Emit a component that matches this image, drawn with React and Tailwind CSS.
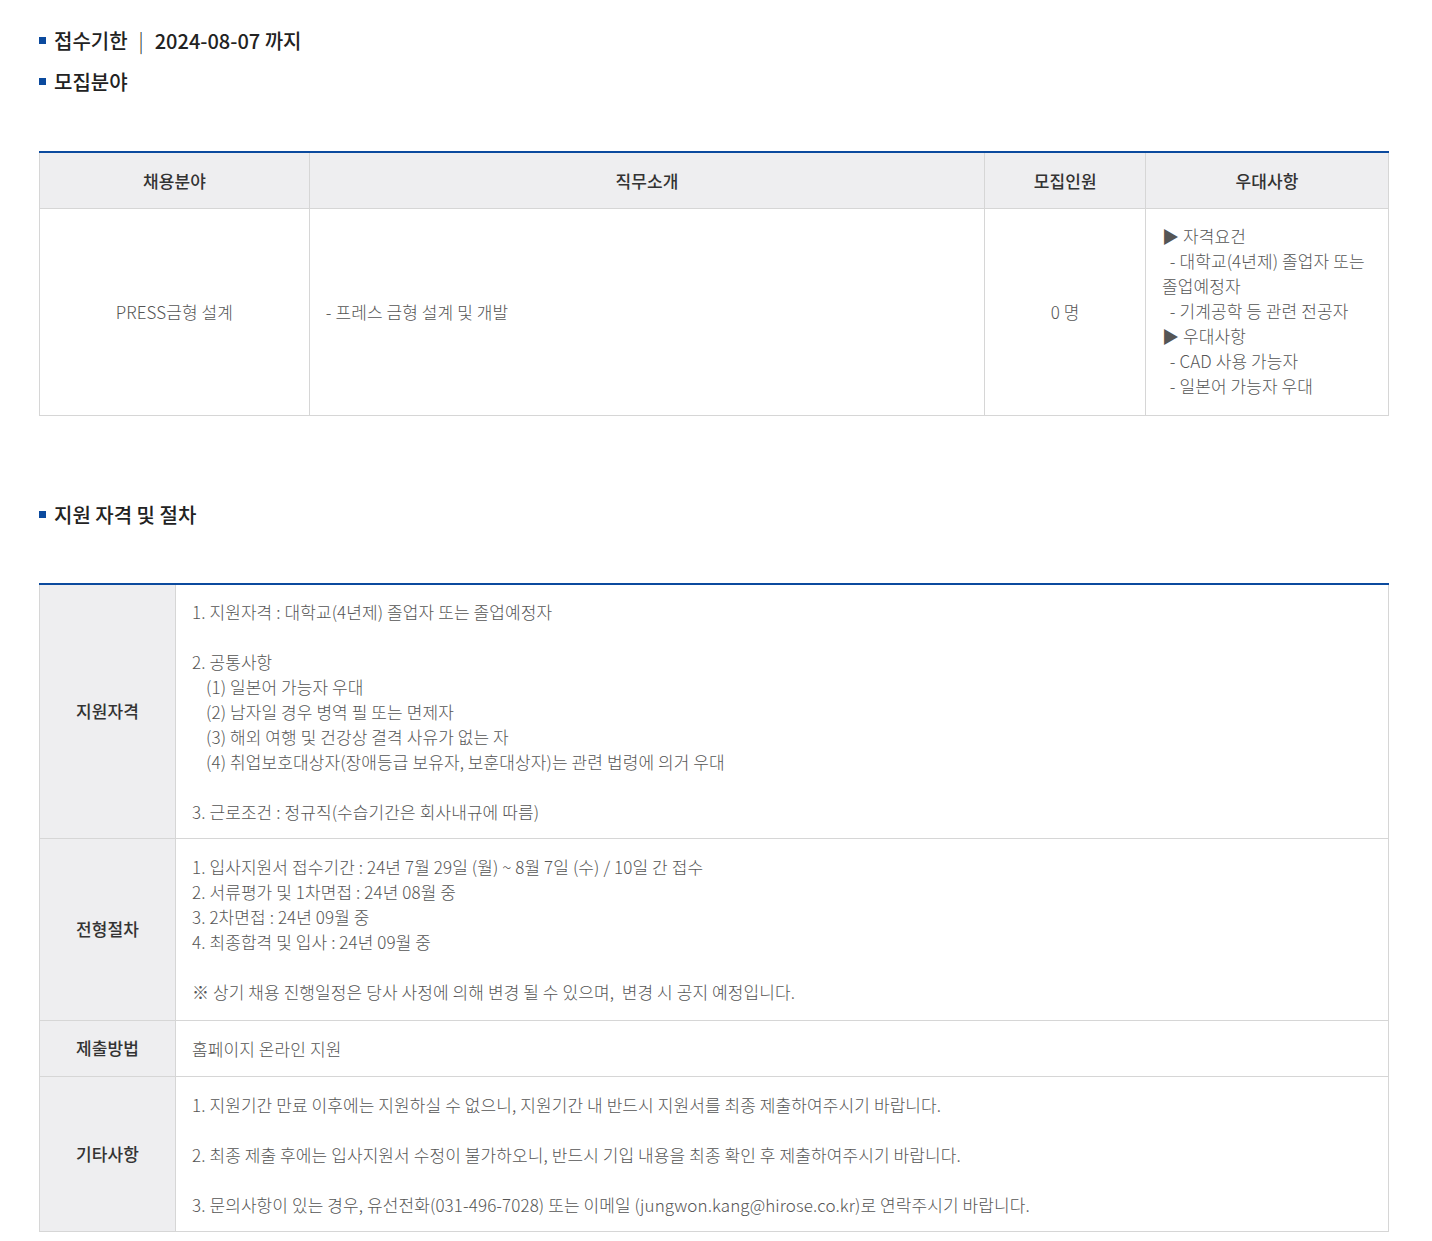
const font = { fontFamily: '"Noto Sans CJK KR", "Noto Sans", sans-serif' };

function Heading({ children, className = "" }) {
    return (
        <h3 className={`flex items-center text-[20px] leading-[26px] font-medium text-[#222] ${className}`}>
            <span className="mr-[8px] mb-[1px] inline-block w-[7px] h-[7px] bg-[#0b4a9e] shrink-0" />
            <span>{children}</span>
        </h3>
    );
}

const qualify = [
    { t: "1. 지원자격 : 대학교(4년제) 졸업자 또는 졸업예정자" },
    { t: "" },
    { t: "2. 공통사항" },
    { t: "(1) 일본어 가능자 우대", indent: true },
    { t: "(2) 남자일 경우 병역 필 또는 면제자", indent: true },
    { t: "(3) 해외 여행 및 건강상 결격 사유가 없는 자", indent: true },
    { t: "(4) 취업보호대상자(장애등급 보유자, 보훈대상자)는 관련 법령에 의거 우대", indent: true },
    { t: "" },
    { t: "3. 근로조건 : 정규직(수습기간은 회사내규에 따름)" },
];

const process = [
    { t: "1. 입사지원서 접수기간 : 24년 7월 29일 (월) ~ 8월 7일 (수) / 10일 간 접수" },
    { t: "2. 서류평가 및 1차면접 : 24년 08월 중" },
    { t: "3. 2차면접 : 24년 09월 중" },
    { t: "4. 최종합격 및 입사 : 24년 09월 중" },
    { t: "" },
    { t: "※ 상기 채용 진행일정은 당사 사정에 의해 변경 될 수 있으며,  변경 시 공지 예정입니다." },
];

const etc = [
    { t: "1. 지원기간 만료 이후에는 지원하실 수 없으니, 지원기간 내 반드시 지원서를 최종 제출하여주시기 바랍니다." },
    { t: "" },
    { t: "2. 최종 제출 후에는 입사지원서 수정이 불가하오니, 반드시 기입 내용을 최종 확인 후 제출하여주시기 바랍니다." },
    { t: "" },
    { t: "3. 문의사항이 있는 경우, 유선전화(031-496-7028) 또는 이메일 (jungwon.kang@hirose.co.kr)로 연락주시기 바랍니다." },
];

const rows = [
    { label: "지원자격", lines: qualify, pad: "pt-[14px] pb-[14px]" },
    { label: "전형절차", lines: process, pad: "pt-[15px] pb-[16px]" },
    { label: "제출방법", lines: [{ t: "홈페이지 온라인 지원" }], pad: "pt-[15px] pb-[15px]" },
    { label: "기타사항", lines: etc, pad: "pt-[15px] pb-[14px]" },
];

function Lines({ lines }) {
    return lines.map((l, i) => (
        <p key={i} className={`h-[25px] whitespace-pre ${l.indent ? "pl-[14px]" : ""}`}>
            {l.t}
        </p>
    ));
}

export default function App() {
    return (
        <div style={font} className="bg-white w-[1432px] min-h-[1241px] pl-[39px] pr-[43px] pt-[28px]">
            <Heading>
                접수기한<span className="mx-[11px] font-light">|</span>2024-08-07 까지
            </Heading>
            <Heading className="mt-[15px]">모집분야</Heading>

            <table className="mt-[56px] w-full border-collapse border-t-2 border-t-[#0b4a9e] text-[17px] tracking-[0.1px]">
                <thead>
                    <tr className="bg-[#eeeef0] h-[56px]">
                        {["채용분야", "직무소개", "모집인원", "우대사항"].map((h, i) => (
                            <th
                                key={h}
                                className={`border border-[#d6d6d6] border-t-0 font-medium text-[#333] ${
                                    ["w-[270px]", "w-[676px]", "w-[161px]", "w-[243px]"][i]
                                }`}
                            >
                                {h}
                            </th>
                        ))}
                    </tr>
                </thead>
                <tbody className="font-light text-[#555] leading-[25px]">
                    <tr>
                        <td className="border border-[#d6d6d6] text-center">PRESS금형 설계</td>
                        <td className="border border-[#d6d6d6] px-[16px]">- 프레스 금형 설계 및 개발</td>
                        <td className="border border-[#d6d6d6] text-center">0 명</td>
                        <td className="border border-[#d6d6d6] pl-[16px] pr-[12px] pt-[14px] pb-[17px] align-top break-keep">
                            <p>▶ 자격요건</p>
                            <p className="whitespace-pre-wrap">{"  - 대학교(4년제) 졸업자 또는 졸업예정자"}</p>
                            <p className="whitespace-pre-wrap">{"  - 기계공학 등 관련 전공자"}</p>
                            <p>▶ 우대사항</p>
                            <p className="whitespace-pre-wrap">{"  - CAD 사용 가능자"}</p>
                            <p className="whitespace-pre-wrap">{"  - 일본어 가능자 우대"}</p>
                        </td>
                    </tr>
                </tbody>
            </table>

            <Heading className="mt-[86px]">지원 자격 및 절차</Heading>

            <table className="mt-[55px] w-full border-collapse border-t-2 border-t-[#0b4a9e] text-[17px] tracking-[0.1px]">
                <tbody>
                    {rows.map((r) => (
                        <tr key={r.label}>
                            <th className="w-[136px] bg-[#eeeef0] border border-[#d6d6d6] border-t-0 font-medium text-[#333]">
                                {r.label}
                            </th>
                            <td className={`border border-[#d6d6d6] border-t-0 px-[16px] ${r.pad} font-light text-[#555] leading-[25px]`}>
                                <Lines lines={r.lines} />
                            </td>
                        </tr>
                    ))}
                </tbody>
            </table>
        </div>
    );
}
